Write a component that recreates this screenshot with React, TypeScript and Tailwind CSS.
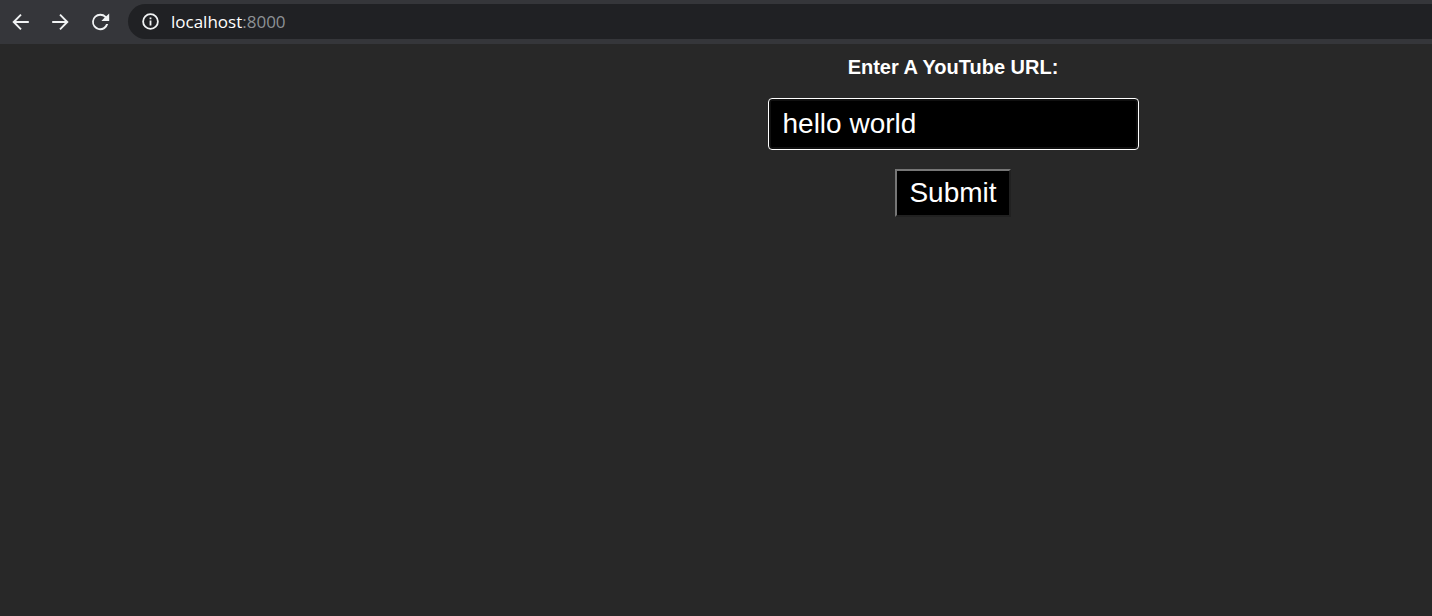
import React, { useState } from "react";

function BackIcon() {
  return (
    <svg className="size-5" viewBox="0 0 20 20" fill="none" stroke="currentColor" strokeWidth="1.9" aria-hidden="true">
      <path d="M18.8 10H3.6M11 2.7 3.7 10l7.3 7.3" />
    </svg>
  );
}

function ForwardIcon() {
  return (
    <svg className="size-5" viewBox="0 0 20 20" fill="none" stroke="currentColor" strokeWidth="1.9" aria-hidden="true">
      <path d="M2.2 10h15.2M10 2.7l7.3 7.3-7.3 7.3" />
    </svg>
  );
}

function ReloadIcon() {
  return (
    <svg className="size-6" viewBox="0 0 24 24" fill="currentColor" aria-hidden="true">
      <path d="M18.2 6.2A8.2 8.2 0 0 0 12.2 3.8a8.2 8.2 0 1 0 8 10.3h-2.1A6.3 6.3 0 1 1 12.2 5.700c1.800 0 3.300.7 4.500 1.900L13.400 10.900H21.200V3.500z" />
    </svg>
  );
}

function InfoIcon() {
  return (
    <svg className="size-[17px] shrink-0" viewBox="0 0 17 17" fill="none" stroke="currentColor" strokeWidth="1.8" aria-hidden="true">
      <circle cx="8.500" cy="8.500" r="7.400" />
      <path d="M8.500 7.600v5M8.500 4.400v1.800" />
    </svg>
  );
}

const navButton = "flex size-10 items-center justify-center";

function Toolbar() {
  return (
    <header className="flex items-center bg-[#35363a] pt-1 pb-[5px] text-[#f1f3f4]">
      <nav className="flex h-[35px] w-32 shrink-0 items-center" aria-label="Browser">
        <button type="button" aria-label="Back" className={navButton}>
          <BackIcon />
        </button>
        <button type="button" aria-label="Forward" className={navButton}>
          <ForwardIcon />
        </button>
        <button type="button" aria-label="Reload" className={navButton}>
          <ReloadIcon />
        </button>
      </nav>
      <div className="flex h-[35px] flex-1 items-center gap-3 rounded-l-full bg-[#202124] pl-[14px]">
        <InfoIcon />
        <a href="http://localhost:8000" className="font-['Open_Sans',sans-serif] text-[17px] leading-6 text-white">
          localhost<span className="text-[#8d9195]">:8000</span>
        </a>
      </div>
    </header>
  );
}

export default function App() {
  const [url, setUrl] = useState("hello world");
  return (
    <div className="flex min-h-screen flex-col bg-[#282828] font-['Liberation_Sans',Arial,sans-serif] text-white">
      <Toolbar />
      <main className="pl-[474px]">
        <form className="flex flex-col items-center pt-3" onSubmit={(e) => e.preventDefault()}>
          <label htmlFor="url" className="text-[20px] leading-[22px] font-bold">
            Enter A YouTube URL:
          </label>
          <input
            id="url"
            type="text"
            value={url}
            onChange={(e) => setUrl(e.target.value)}
            className="mt-5 h-[52px] w-[371px] rounded border border-white bg-black px-[14px] text-[28px] leading-8 outline-none inset-ring-2 inset-ring-[#101010]"
          />
          <button
            type="submit"
            className="mt-[19px] h-12 border-2 border-t-[#767676] border-r-[#212121] border-b-[#212121] border-l-[#767676] bg-black px-3 text-[28px] leading-8"
          >
            Submit
          </button>
        </form>
      </main>
    </div>
  );
}
